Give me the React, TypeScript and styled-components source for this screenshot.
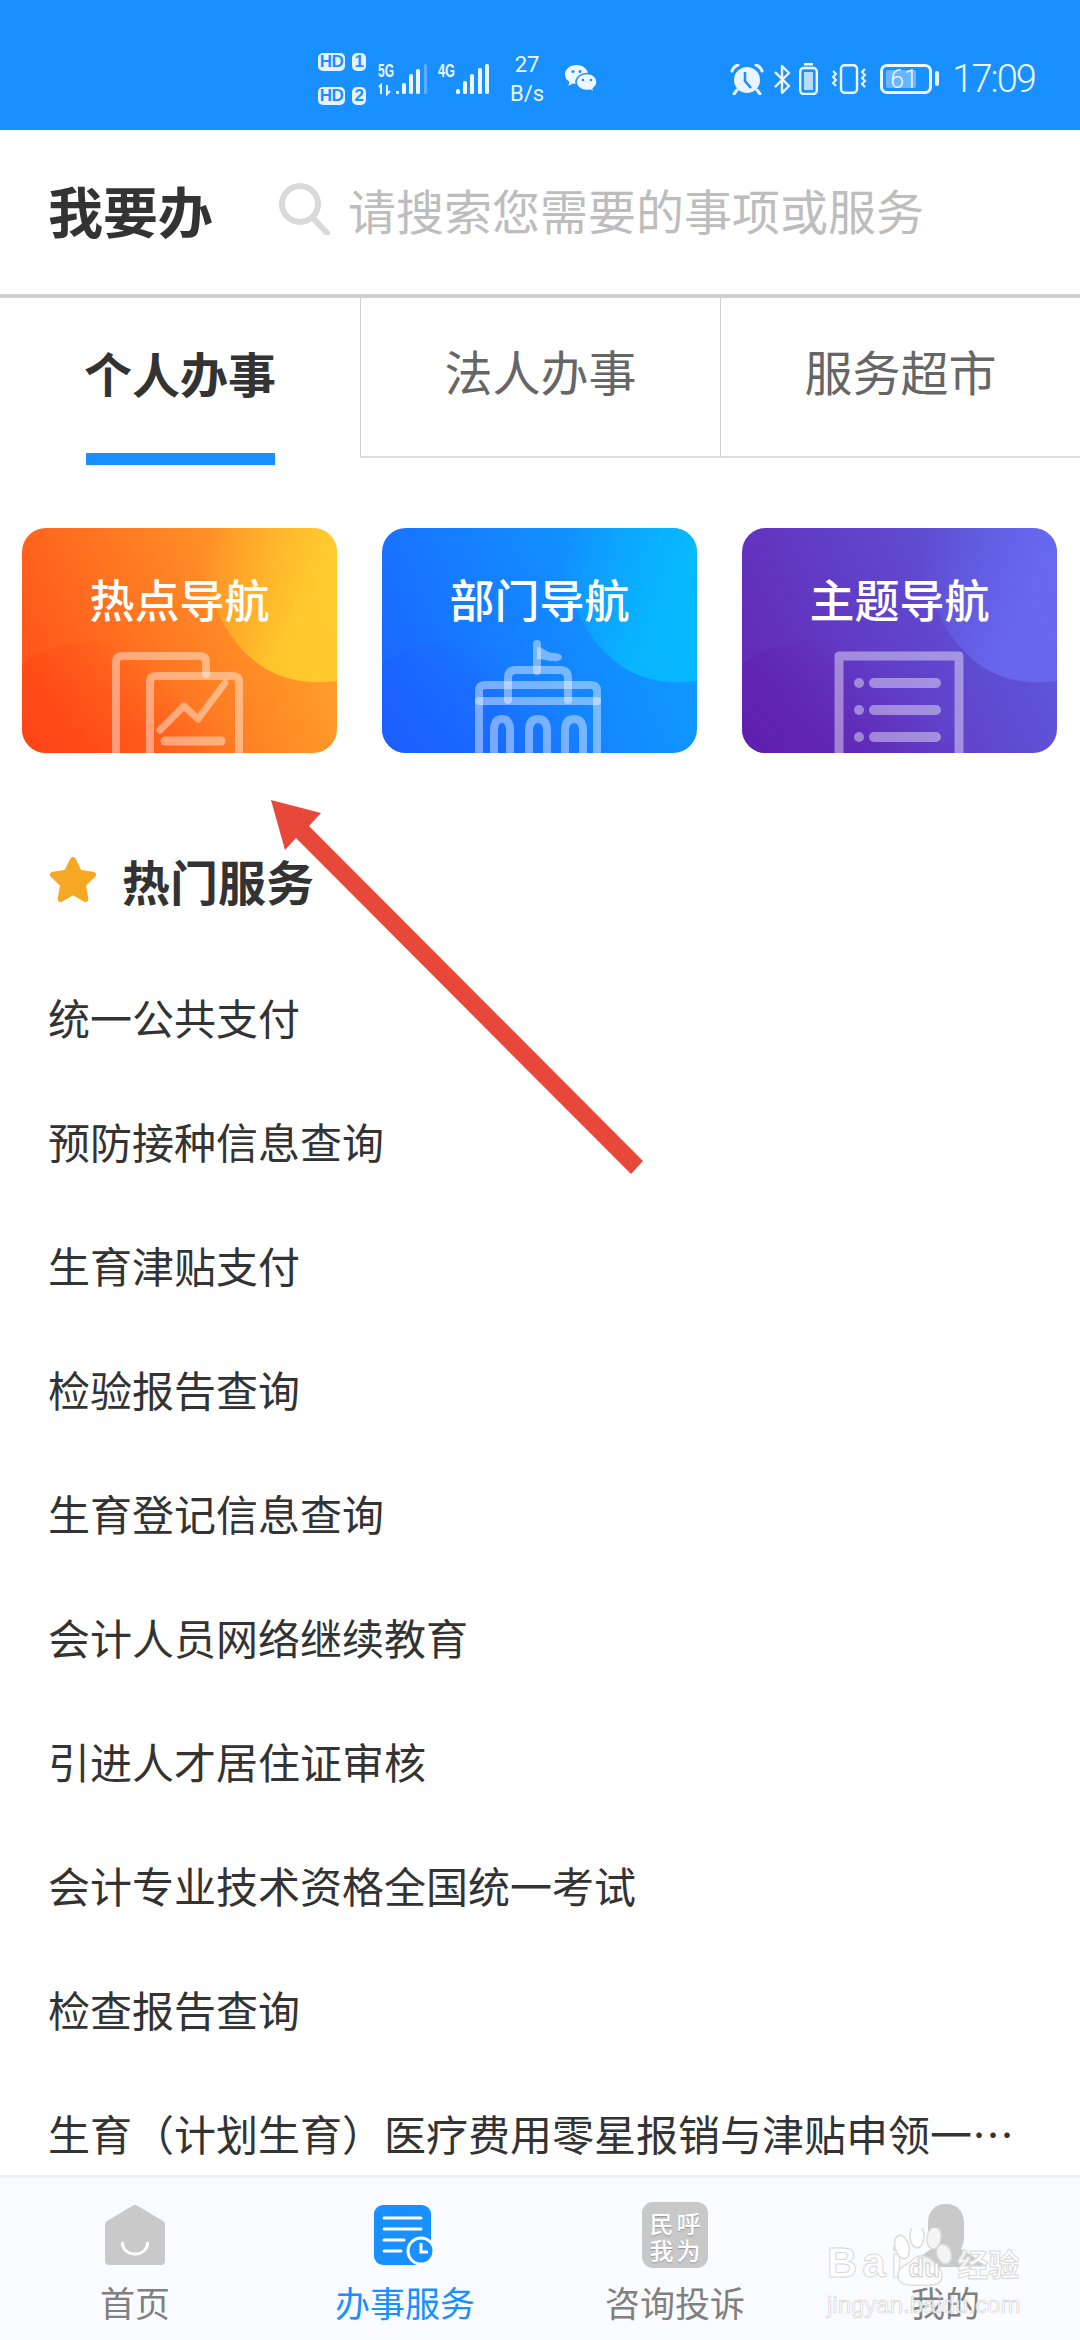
import React from "react"
import styled, { createGlobalStyle } from "styled-components"

const CJK = `"Noto Sans CJK SC", "Noto Sans", sans-serif`

const GlobalStyle = createGlobalStyle`
  html, body {
    margin: 0;
    padding: 0;
    background: #fff;
    font-family: ${CJK};
  }
  * { box-sizing: border-box; }
`

const Page = styled.div`
  position: relative;
  width: 1080px;
  height: 2340px;
  display: flex;
  flex-direction: column;
  overflow: hidden;
  background: #fff;
`

/* status bar */
const StatusBar = styled.div`
  height: 130px;
  flex: none;
  display: flex;
  align-items: center;
  padding: 28px 45px 0 318px;
  background: #1890ff;
  color: #eef6ff;
`

const SimGrid = styled.div`
  display: grid;
  grid-template-columns: 27px 14px;
  column-gap: 7px;
  row-gap: 16px;
  margin-right: 12px;
`

const SimBadge = styled.span`
  height: 18px;
  border-radius: 5px;
  background: #e6f2ff;
  color: #1890ff;
  font: 700 17px/18px "Liberation Sans", sans-serif;
  letter-spacing: -0.5px;
  text-align: center;
`

const Speed = styled.div`
  width: 40px;
  margin-left: 17px;
  text-align: center;
  font: 400 22px/29px Roboto, sans-serif;
`

const StatusIcon = styled.svg<{ $gap?: number }>`
  display: block;
  flex: none;
  margin-left: ${(p) => p.$gap ?? 0}px;
`

const Clock = styled.span`
  margin-left: 13px;
  font: 300 38px/44px Roboto, sans-serif;
  letter-spacing: -1.9px;
`

const RightGroup = styled.div`
  margin-left: auto;
  display: flex;
  align-items: center;
`

/* search header */
const Header = styled.div`
  height: 168px;
  flex: none;
  display: flex;
  align-items: center;
  padding: 0 0 6px 48px;
  border-bottom: 4px solid #cfcfcf;
`

const Title = styled.h1`
  margin: 0;
  width: 162px;
  font-size: 55px;
  line-height: 70px;
  font-weight: 700;
  color: #333;
  white-space: nowrap;
`

const SearchIcon = styled.svg`
  margin-left: 68px;
  flex: none;
`

const Placeholder = styled.span`
  margin-left: 18px;
  font-size: 48px;
  line-height: 64px;
  color: #bdbdbd;
`

/* tabs */
const Tabs = styled.div`
  flex: none;
  height: 167px;
  display: flex;
  align-items: flex-start;
`

const Tab = styled.div<{ $active?: boolean }>`
  width: 360px;
  display: flex;
  flex-direction: column;
  align-items: center;
  height: ${(p) => (p.$active ? 167 : 160)}px;
  padding-top: ${(p) => (p.$active ? 39 : 37)}px;
  font-size: 48px;
  line-height: 70px;
  font-weight: ${(p) => (p.$active ? 700 : 400)};
  color: ${(p) => (p.$active ? "#333" : "#666")};
  border-left: ${(p) => (p.$active ? "none" : "1px solid #cfcfcf")};
  border-bottom: ${(p) => (p.$active ? "none" : "2px solid #dedede")};
`

const TabBar = styled.span`
  margin-top: auto;
  width: 189px;
  height: 12px;
  background: #1890ff;
`

/* nav cards */
const Cards = styled.div`
  flex: none;
  display: flex;
  gap: 45px;
  padding: 63px 22px 0;
`

const Card = styled.div<{ $from: string; $to: string }>`
  position: relative;
  width: 315px;
  height: 225px;
  border-radius: 24px;
  overflow: hidden;
  background: linear-gradient(65deg, ${(p) => p.$from}, ${(p) => p.$to});
`

const CardArt = styled.svg`
  position: absolute;
  inset: 0;
`

const CardLabel = styled.div`
  position: relative;
  padding-top: 40px;
  text-align: center;
  font-size: 45px;
  line-height: 62px;
  font-weight: 500;
  color: #fff;
`

/* hot services */
const Section = styled.div`
  flex: 1;
  min-height: 0;
  overflow: hidden;
  padding: 87px 60px 0 48px;
`

const SectionHead = styled.div`
  display: flex;
  align-items: center;
  gap: 24px;
  height: 80px;
  margin-bottom: 35px;
  font-size: 48px;
  font-weight: 700;
  color: #333;
`

const ServiceRow = styled.div`
  height: 124px;
  line-height: 124px;
  font-size: 42px;
  color: #333;
  white-space: nowrap;
  overflow: hidden;
  text-overflow: ellipsis;
`

/* bottom nav */
const BottomNav = styled.div`
  flex: none;
  height: 165px;
  display: flex;
  padding-top: 24px;
  background: #fafbfe;
  border-top: 3px solid #f1f1f3;
`

const NavItem = styled.div<{ $active?: boolean }>`
  flex: 1;
  display: flex;
  flex-direction: column;
  align-items: center;
  font-size: 35px;
  line-height: 40px;
  color: ${(p) => (p.$active ? "#1890ff" : "#808080")};
`

const NavIconSlot = styled.div`
  height: 66px;
  margin-bottom: 14px;
  display: flex;
  align-items: center;
  justify-content: center;
`

const HotlineIcon = styled.div`
  width: 66px;
  height: 66px;
  padding: 7px 6px;
  display: grid;
  grid-template-columns: 1fr 1fr;
  border-radius: 11px;
  background: #c8c8c8;
  color: #fff;
  font-size: 24px;
  line-height: 27px;
  font-weight: 500;
  text-align: center;
  text-shadow: 0 1px 1px rgba(0, 0, 0, 0.25);
`

/* pointer drawn over the screenshot */
const ArrowLayer = styled.svg`
  position: absolute;
  left: 0;
  top: 0;
  pointer-events: none;
`

/* baidu watermark */
const Watermark = styled.div`
  position: absolute;
  left: 827px;
  top: 2228px;
  width: 200px;
  color: rgba(255, 255, 255, 0.85);
  -webkit-text-stroke: 1px #d9d9d9;
  font-family: "Liberation Sans", sans-serif;
`

const WatermarkTop = styled.div`
  display: flex;
  align-items: flex-end;
  height: 58px;
`

const BaiText = styled.span`
  font-size: 42px;
  line-height: 46px;
  font-weight: 700;
  letter-spacing: 5px;
`

const PawBox = styled.span`
  position: relative;
  width: 60px;
  height: 58px;
  margin-left: -14px;
  flex: none;
`

const PawDu = styled.span`
  position: absolute;
  left: 15px;
  bottom: 3px;
  font-size: 26px;
  line-height: 30px;
  font-weight: 700;
  -webkit-text-stroke: 1px #cfcfcf;
`

const JingYan = styled.span`
  margin-left: 4px;
  font-family: ${CJK};
  font-size: 31px;
  line-height: 46px;
  font-weight: 700;
`

const Domain = styled.div`
  margin-top: 4px;
  font-size: 24px;
  line-height: 30px;
  white-space: nowrap;
  -webkit-text-stroke: 0.6px #cfcfcf;
`

const CARD_WAVES = (id: string, dark: string, light: string) => (
  <>
    <defs>
      <linearGradient id={id} x1="0" y1="1" x2="1" y2="0.4">
        <stop offset="0" stopColor={dark} stopOpacity="0.95" />
        <stop offset="0.75" stopColor={dark} stopOpacity="0" />
      </linearGradient>
      <linearGradient id={`${id}l`} x1="0" y1="0" x2="0.8" y2="0.45">
        <stop offset="0.1" stopColor={light} stopOpacity="0" />
        <stop offset="1" stopColor={light} stopOpacity="0.8" />
      </linearGradient>
    </defs>
    <path d="M178 0C178 70 215 158 300 154L315 153V0Z" fill={`url(#${id}l)`} />
    <path d="M0 136C30 112 90 100 130 135C165 165 190 190 230 225H0Z" fill={`url(#${id})`} />
  </>
)

const ART = { stroke: "#fff", strokeOpacity: 0.42, fill: "none", strokeLinecap: "round", strokeLinejoin: "round" } as const

function HotArt() {
  return (
    <CardArt width="315" height="225" viewBox="0 0 315 225">
      {CARD_WAVES("w1", "#ff4416", "#ffd42e")}
      <g {...ART} strokeWidth="8">
        <path d="M94 235V134q0-6 6-6h78q6 0 6 6v12" />
        <path d="M128 235V154q0-6 6-6h77q6 0 6 6v81" />
        <path d="M138 202l24-24 14 13 27-36" strokeWidth="7" />
        <path d="M143 213h56" strokeWidth="9" />
      </g>
    </CardArt>
  )
}

function DeptArt() {
  return (
    <CardArt width="315" height="225" viewBox="0 0 315 225">
      {CARD_WAVES("w2", "#1c5fff", "#06bfff")}
      <g {...ART} strokeWidth="8">
        <path d="M155 116v27" />
        <path d="M155 119c8 1 10 6 16 6 4 0 9 1 9 4s-5 5-9 4c-6 0-10-2-16-2" fill="#fff" fillOpacity="0.42" stroke="none" />
        <path d="M126 172v-22q0-8 8-8h44q8 0 8 8v22" />
        <path d="M97 235v-72q0-6 6-6h106q6 0 6 6v72" />
        <path d="M97 173h118" />
        <path d="M112 235v-32q0-12 8-12t8 12v32" />
        <path d="M147 235v-32q0-12 9-12t9 12v32" />
        <path d="M183 235v-32q0-12 9-12t9 12v32" />
      </g>
    </CardArt>
  )
}

function TopicArt() {
  return (
    <CardArt width="315" height="225" viewBox="0 0 315 225">
      {CARD_WAVES("w3", "#5f1eae", "#6a6cf2")}
      <g {...ART}>
        <path d="M97 235V128h120v107" strokeWidth="9" />
        <g strokeWidth="10">
          <path d="M132 155h62M132 182h62M132 209h62" />
        </g>
      </g>
      <g fill="#fff" fillOpacity="0.42">
        <circle cx="117" cy="155" r="5" />
        <circle cx="117" cy="182" r="5" />
        <circle cx="117" cy="209" r="5" />
      </g>
    </CardArt>
  )
}

function NetworkIcon() {
  return (
    <StatusIcon width="112" height="36" viewBox="0 0 112 36">
      <g fill="#eef6ff" fontFamily="Liberation Sans, sans-serif" fontWeight="700" fontSize="19">
        <text x="0" y="16" textLength="16" lengthAdjust="spacingAndGlyphs">5G</text>
        <text x="60" y="16" textLength="17" lengthAdjust="spacingAndGlyphs">4G</text>
      </g>
      <path d="M3 33V24l-2 2M9 24v9l3-3" stroke="#eef6ff" strokeWidth="2" fill="none" />
      <g fill="#eef6ff">
        <rect x="18" y="30" width="3" height="3" rx="1" />
        <rect x="24" y="22" width="4" height="11" rx="1.5" />
        <rect x="31" y="13" width="4" height="20" rx="1.5" />
        <rect x="38" y="8" width="4" height="25" rx="1.5" />
        <rect x="46" y="3" width="3" height="30" rx="1.5" fillOpacity="0.3" />
        <rect x="78" y="28" width="4" height="5" rx="1.5" />
        <rect x="85" y="20" width="4" height="13" rx="1.5" />
        <rect x="92" y="13" width="4" height="20" rx="1.5" />
        <rect x="100" y="7" width="4" height="26" rx="1.5" />
        <rect x="107" y="3" width="4" height="30" rx="1.5" />
      </g>
    </StatusIcon>
  )
}

function WechatIcon() {
  return (
    <StatusIcon $gap={18} width="33" height="28" viewBox="0 0 33 28">
      <path d="M11.5 0C5 0 0 4.2 0 9.5c0 3 1.7 5.6 4.3 7.3L3.5 21l4.3-2.4c1.2.3 2.4.4 3.7.4 6.4 0 11.5-4.2 11.5-9.5S17.9 0 11.5 0z" fill="#eef6ff" />
      <path d="M22 8.5c-6 0-11 3.9-11 8.5s5 8.5 11 8.5c1 0 2-.1 3-.4l4 2-.8-3.6c2.3-1.6 3.8-3.9 3.8-6.5 0-4.6-4-8.5-10-8.5z" fill="#eef6ff" stroke="#1890ff" strokeWidth="1.5" />
      <g fill="#1890ff">
        <circle cx="8" cy="6.5" r="1.5" />
        <circle cx="15" cy="6.5" r="1.5" />
        <circle cx="18" cy="15" r="1.3" />
        <circle cx="26" cy="15" r="1.3" />
      </g>
    </StatusIcon>
  )
}

function AlarmIcon() {
  return (
    <StatusIcon width="34" height="31" viewBox="0 0 34 31">
      <circle cx="17" cy="16" r="13" fill="#eaf4ff" />
      <path d="M15 8v9l6 7" stroke="#1890ff" strokeWidth="2.5" fill="none" />
      <path d="M2 7c1-3 3-5 6-6M32 7c-1-3-3-5-6-6M7 26l-3 4M27 26l3 4" stroke="#eaf4ff" strokeWidth="3" fill="none" strokeLinecap="round" />
    </StatusIcon>
  )
}

function BluetoothIcon() {
  return (
    <StatusIcon $gap={10} width="17" height="31" viewBox="0 0 17 31">
      <path d="M1 8l14 14-7 7V2l7 7L1 23" stroke="#eef6ff" strokeWidth="2.4" fill="none" strokeLinejoin="round" />
    </StatusIcon>
  )
}

function SmallBatteryIcon() {
  return (
    <StatusIcon $gap={8} width="19" height="32" viewBox="0 0 19 32">
      <rect x="5" y="0" width="9" height="2.5" fill="#eef6ff" />
      <rect x="1.2" y="5" width="16.6" height="26" rx="3.5" stroke="#eef6ff" strokeWidth="2.4" fill="none" />
      <rect x="5" y="9" width="9" height="18" fill="#eef6ff" fillOpacity="0.75" />
    </StatusIcon>
  )
}

function VibrateIcon() {
  return (
    <StatusIcon $gap={13} width="36" height="30" viewBox="0 0 36 30">
      <rect x="10" y="1.2" width="16" height="27.6" rx="3.5" stroke="#eef6ff" strokeWidth="2.4" fill="none" />
      <path d="M2 7l3 3-3 3 3 3-3 3 3 3M34 5l-3 3 3 3-3 3 3 3-3 3 3 3" stroke="#eef6ff" strokeWidth="2" fill="none" />
    </StatusIcon>
  )
}

function BatteryIcon() {
  return (
    <StatusIcon $gap={13} width="59" height="30" viewBox="0 0 59 30">
      <rect x="1.5" y="1.5" width="49" height="27" rx="5.5" stroke="#eef6ff" strokeWidth="3" fill="none" />
      <rect x="6" y="6" width="30" height="18" rx="2" fill="#fff" fillOpacity="0.35" />
      <text x="24" y="24" textAnchor="middle" fill="#eef6ff" fontFamily="Roboto, sans-serif" fontSize="25" fontWeight="300">61</text>
      <rect x="55" y="7" width="4" height="15" rx="2" fill="#eef6ff" />
    </StatusIcon>
  )
}

function HomeIcon() {
  return (
    <svg width="60" height="60" viewBox="0 0 60 60">
      <path d="M27 1L2 16q-2 1.200-2 4v36q0 4 4 4h52q4 0 4-4V20q0-2.800-2-4L33 1q-3-2-6 0z" fill="#c9c9c9" />
      <path d="M17.500 38c0 6 5 11 12.500 11s12.500-5 12.500-11" stroke="#fff" strokeWidth="3" fill="none" strokeLinecap="round" />
    </svg>
  )
}

function ServiceIcon() {
  return (
    <svg width="62" height="62" viewBox="0 0 62 62">
      <rect x="0" y="1" width="57" height="60" rx="9" fill="#1890ff" />
      <path d="M10 14h37M10 25h37M10 36h20M10 47h17" stroke="#fff" strokeWidth="3" strokeLinecap="round" />
      <circle cx="47" cy="47" r="13" fill="#1890ff" stroke="#fff" strokeWidth="3" />
      <path d="M47 39v9h7" stroke="#fff" strokeWidth="3" fill="none" />
    </svg>
  )
}

function PersonIcon() {
  return (
    <svg width="80" height="64" viewBox="0 0 80 64">
      <path d="M23 20C23 8 30 1 41 1s18 7 18 19v14c0 6-2 10-3 12l16 10c3 2 5 4 6 8H4c2-3 4-6 8-8l14-10c-2-3-3-6-3-12z" fill="#c9c9c9" />
    </svg>
  )
}

function Paw() {
  return (
    <svg width="60" height="58" viewBox="0 0 60 58" style={{ position: "absolute", left: 0, top: 0 }}>
      <g fill="#fff" fillOpacity="0.8" stroke="#dcdcdc" strokeWidth="1.5">
        <ellipse cx="9" cy="19" rx="7" ry="12" transform="rotate(-15 9 19)" />
        <ellipse cx="24" cy="8" rx="7" ry="12" />
        <ellipse cx="41" cy="10" rx="7" ry="11" transform="rotate(8 41 10)" />
        <ellipse cx="51" cy="26" rx="7" ry="10" transform="rotate(-20 51 26)" />
        <path d="M22 30c7-5 14-1 20 5 7 5 12 20-2 22-8 1-14 0-24 0C2 56 2 42 12 37c4-2 6-4 10-7z" />
      </g>
    </svg>
  )
}

const services = [
  "统一公共支付",
  "预防接种信息查询",
  "生育津贴支付",
  "检验报告查询",
  "生育登记信息查询",
  "会计人员网络继续教育",
  "引进人才居住证审核",
  "会计专业技术资格全国统一考试",
  "检查报告查询",
  "生育（计划生育）医疗费用零星报销与津贴申领一次性补助",
]

export default function App() {
  return (
    <Page>
      <GlobalStyle />
      <StatusBar>
        <SimGrid>
          <SimBadge>HD</SimBadge>
          <SimBadge>1</SimBadge>
          <SimBadge>HD</SimBadge>
          <SimBadge>2</SimBadge>
        </SimGrid>
        <NetworkIcon />
        <Speed>
          27
          <br />
          B/s
        </Speed>
        <WechatIcon />
        <RightGroup>
          <AlarmIcon />
          <BluetoothIcon />
          <SmallBatteryIcon />
          <VibrateIcon />
          <BatteryIcon />
          <Clock>17:09</Clock>
        </RightGroup>
      </StatusBar>

      <Header>
        <Title>我要办</Title>
        <SearchIcon width="52" height="52" viewBox="0 0 52 52">
          <circle cx="22" cy="21" r="18" stroke="#d9d9d9" strokeWidth="6" fill="none" />
          <path d="M35 35l14 15" stroke="#d9d9d9" strokeWidth="6" strokeLinecap="round" />
        </SearchIcon>
        <Placeholder>请搜索您需要的事项或服务</Placeholder>
      </Header>

      <Tabs>
        <Tab $active>
          个人办事
          <TabBar />
        </Tab>
        <Tab>法人办事</Tab>
        <Tab>服务超市</Tab>
      </Tabs>

      <Cards>
        <Card $from="#ff4a18" $to="#ffb02e">
          <HotArt />
          <CardLabel>热点导航</CardLabel>
        </Card>
        <Card $from="#1c62ff" $to="#0ca6ff">
          <DeptArt />
          <CardLabel>部门导航</CardLabel>
        </Card>
        <Card $from="#6424b4" $to="#5c60e0">
          <TopicArt />
          <CardLabel>主题导航</CardLabel>
        </Card>
      </Cards>

      <Section>
        <SectionHead>
          <svg width="50" height="50" viewBox="0 0 49 49">
            <path d="M24.500 5l6 12.500 13.500 2-10 9.500 2.500 14-12-6.800-12 6.800 2.500-14-10-9.500 13.500-2z" fill="#f6a723" stroke="#f6a723" strokeWidth="6" strokeLinejoin="round" />
          </svg>
          热门服务
        </SectionHead>
        {services.map((s) => (
          <ServiceRow key={s}>{s}</ServiceRow>
        ))}
      </Section>

      <BottomNav>
        <NavItem>
          <NavIconSlot>
            <HomeIcon />
          </NavIconSlot>
          首页
        </NavItem>
        <NavItem $active>
          <NavIconSlot>
            <ServiceIcon />
          </NavIconSlot>
          办事服务
        </NavItem>
        <NavItem>
          <NavIconSlot>
            <HotlineIcon>
              <span>民</span>
              <span>呼</span>
              <span>我</span>
              <span>为</span>
            </HotlineIcon>
          </NavIconSlot>
          咨询投诉
        </NavItem>
        <NavItem>
          <NavIconSlot>
            <PersonIcon />
          </NavIconSlot>
          我的
        </NavItem>
      </BottomNav>

      <ArrowLayer width="1080" height="2340" viewBox="0 0 1080 2340">
        <polygon points="271,800 321,813 309,826 643,1161 631,1174 296,838 285,850" fill="#e8483a" />
      </ArrowLayer>

      <Watermark>
        <WatermarkTop>
          <BaiText>Bai</BaiText>
          <PawBox>
            <Paw />
            <PawDu>du</PawDu>
          </PawBox>
          <JingYan>经验</JingYan>
        </WatermarkTop>
        <Domain>jingyan.baidu.com</Domain>
      </Watermark>
    </Page>
  )
}
